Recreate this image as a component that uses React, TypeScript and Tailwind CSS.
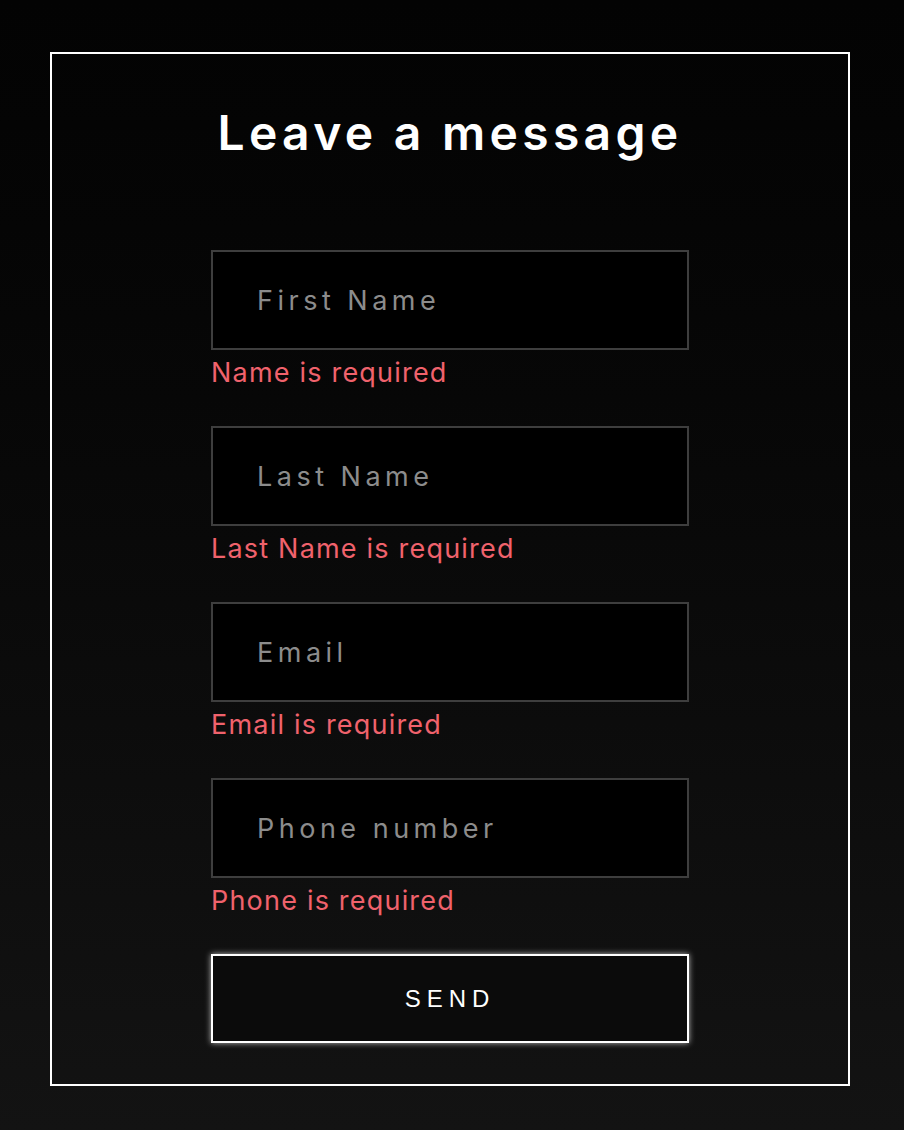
import { useState } from "react";

const FIELDS = [
  { key: "first", placeholder: "First Name", error: "Name is required" },
  { key: "last", placeholder: "Last Name", error: "Last Name is required" },
  { key: "email", placeholder: "Email", error: "Email is required" },
  { key: "phone", placeholder: "Phone number", error: "Phone is required" },
] as const;

export default function App() {
  const [values, setValues] = useState<Record<string, string>>({});

  return (
    <div className="min-h-[1130px] w-full bg-gradient-to-b from-[#030303] to-[#131313] pt-[52px] pl-[50px] font-['Inter',sans-serif]">
      <div className="flex h-[1034px] w-[800px] flex-col items-center border-2 border-white">
        {/* Heading */}
        <h1 className="mt-[44px] text-[48px] leading-[70px] font-semibold tracking-[4.3px] text-white">
          Leave a message
        </h1>

        <form
          className="mt-[82px] flex w-[478px] flex-col"
          onSubmit={(e) => e.preventDefault()}
        >
          {FIELDS.map((f) => (
            <div key={f.key} className="flex flex-col">
              <input
                type="text"
                value={values[f.key] ?? ""}
                onChange={(e) =>
                  setValues((v) => ({ ...v, [f.key]: e.target.value }))
                }
                placeholder={f.placeholder}
                className="h-[100px] w-full border-2 border-[#3e3e3e] bg-black pl-[44px] text-[27px] tracking-[4.5px] text-white outline-none placeholder:text-[#8c8c8c]"
              />
              <p className="mt-[3px] mb-[33px] text-[27px] leading-[40px] tracking-[1.2px] text-[#f0626c]">
                {f.error}
              </p>
            </div>
          ))}

          {/* Send button */}
          <button
            type="submit"
            className="h-[89px] w-full border-2 border-white bg-[#0b0b0b] font-['Liberation_Sans',sans-serif] text-[24px] tracking-[6px] text-white shadow-[0_0_6px_rgba(255,255,255,0.7)]"
          >
            SEND
          </button>
        </form>
      </div>
    </div>
  );
}
